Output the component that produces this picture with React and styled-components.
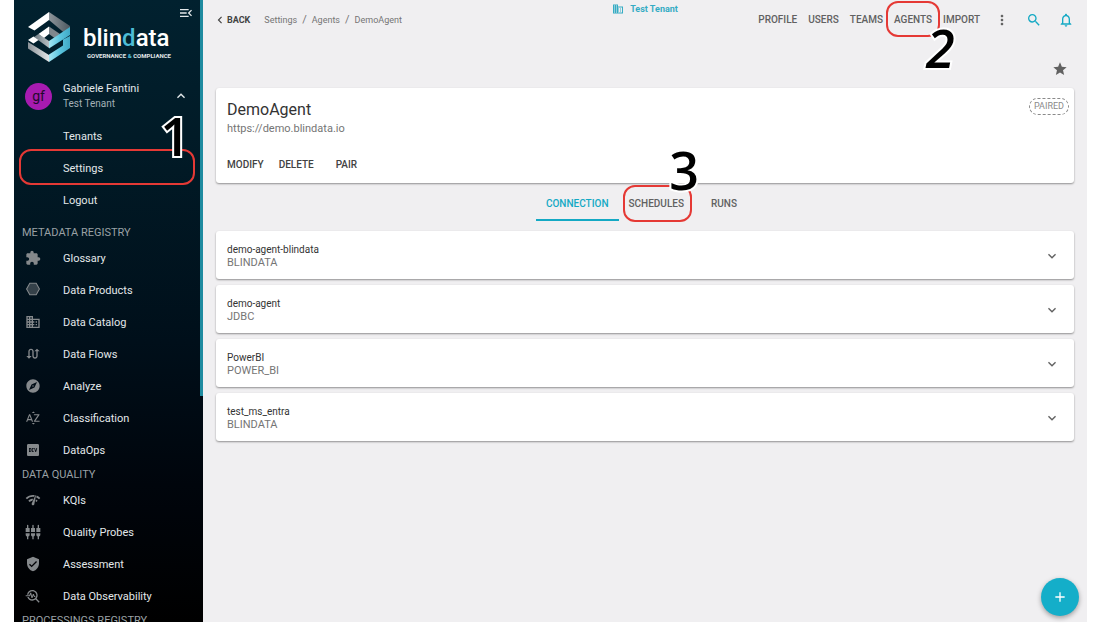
import React, { useState } from "react";
import styled, { createGlobalStyle, css } from "styled-components";
import {
  MdAdd,
  MdChevronLeft,
  MdDomain,
  MdExpandLess,
  MdExpandMore,
  MdExplore,
  MdExtension,
  MdLogoDev,
  MdMenuOpen,
  MdMoreVert,
  MdNetworkCheck,
  MdNotificationsNone,
  MdSearch,
  MdSettingsInputComponent,
  MdSortByAlpha,
  MdStar,
  MdSwapCalls,
  MdTroubleshoot,
  MdVerifiedUser,
} from "react-icons/md";

const HexagonIcon = () => (
  <svg viewBox="0 0 24 24" width="1em" height="1em">
    <path
      d="M7.200 2h9.600L21.600 10.500l-4.800 8.500H7.200L2.400 10.500z"
      fill="currentColor"
      fillOpacity="0.4"
      stroke="currentColor"
      strokeWidth="1.6"
    />
  </svg>
);

const sections = [
  {
    title: "METADATA REGISTRY",
    items: [
      { label: "Glossary", icon: MdExtension },
      { label: "Data Products", icon: HexagonIcon },
      { label: "Data Catalog", icon: MdDomain },
      { label: "Data Flows", icon: MdSwapCalls },
      { label: "Analyze", icon: MdExplore },
      { label: "Classification", icon: MdSortByAlpha },
      { label: "DataOps", icon: MdLogoDev },
    ],
  },
  {
    title: "DATA QUALITY",
    items: [
      { label: "KQIs", icon: MdNetworkCheck },
      { label: "Quality Probes", icon: MdSettingsInputComponent },
      { label: "Assessment", icon: MdVerifiedUser },
      { label: "Data Observability", icon: MdTroubleshoot },
    ],
  },
  { title: "PROCESSINGS REGISTRY", items: [] },
];

const connections = [
  { name: "demo-agent-blindata", type: "BLINDATA" },
  { name: "demo-agent", type: "JDBC" },
  { name: "PowerBI", type: "POWER_BI" },
  { name: "test_ms_entra", type: "BLINDATA" },
];

const Logo = () => (
  <LogoBox>
    <svg viewBox="0 0 43 50" width="43" height="50">
      <defs>
        <linearGradient id="band" x1="0" x2="1" y1="0" y2="0">
          <stop offset="0" stopColor="#a5e6f3" />
          <stop offset="0.5" stopColor="#5cc6e0" />
          <stop offset="1" stopColor="#3fa9c6" />
        </linearGradient>
        <linearGradient id="gray" x1="0" x2="1" y1="0" y2="0">
          <stop offset="0" stopColor="#8b9298" />
          <stop offset="1" stopColor="#e3e6e8" />
        </linearGradient>
        <linearGradient id="roof" x1="0" x2="1" y1="0" y2="0">
          <stop offset="0" stopColor="#8e959b" />
          <stop offset="1" stopColor="#4c5860" />
        </linearGradient>
      </defs>
      <path d="M0 15L21 0v8L6.500 18.500z" fill="#fff" />
      <path d="M21 0l21 14v4l-5 3.500L21 8z" fill="url(#roof)" />
      <path d="M10.500 22L21 14.500V22l-5 4z" fill="#fff" />
      <path d="M21 14.500L32 22l-5.500 4L21 22z" fill="#7f878d" />
      <path d="M10.500 22L21 29v7L6 25z" fill="url(#gray)" opacity="0.8" />
      <path d="M42 15v8L21 36.500V29z" fill="url(#band)" />
      <path d="M0 28l5.500-3.500L10.500 28 5.500 31.500z" fill="#fff" />
      <path d="M0 30l21 13v7L0 36.500z" fill="url(#gray)" />
      <path d="M35 27.500l7-3.500v12L21 50v-7.500l14-9z" fill="url(#band)" />
    </svg>
    <div>
      <LogoName>
        blin<b>d</b>ata
      </LogoName>
      <LogoTag>
        GOVERNANCE <b>&amp;</b> COMPLIANCE
      </LogoTag>
    </div>
  </LogoBox>
);

const Connection = ({ name, type }) => {
  const [open, setOpen] = useState(false);
  return (
    <ConnectionCard>
      <ConnectionButton aria-expanded={open} onClick={() => setOpen((prev) => !prev)}>
        <span>
          <ConnectionName>{name}</ConnectionName>
          <ConnectionType>{type}</ConnectionType>
        </span>
        {open ? <MdExpandLess /> : <MdExpandMore />}
      </ConnectionButton>
    </ConnectionCard>
  );
};

const App = () => {
  const [tab, setTab] = useState("CONNECTION");
  return (
    <Page>
      <GlobalStyle />
      <Sidebar>
        <CollapseButton aria-label="Collapse menu">
          <MdMenuOpen />
        </CollapseButton>
        <Logo />
        <User aria-label="Account menu">
          <Avatar>gf</Avatar>
          <UserText>
            <UserName>Gabriele Fantini</UserName>
            <UserTenant>Test Tenant</UserTenant>
          </UserText>
          <MdExpandLess />
        </User>
        <UserMenu>
          <MenuItem href="#tenants">Tenants</MenuItem>
          <MenuItem href="#settings">
            Settings
            <Ring $inset="-3px 5px -1px 5px" />
            <Step $inset="-36px 10px auto auto">1</Step>
          </MenuItem>
          <MenuItem href="#logout">Logout</MenuItem>
        </UserMenu>
        {sections.map((section) => (
          <React.Fragment key={section.title}>
            <SectionTitle>{section.title}</SectionTitle>
            <SectionList>
              {section.items.map(({ label, icon: Icon }) => (
                <MenuItem key={label} href="#">
                  <MenuIcon>
                    <Icon />
                  </MenuIcon>
                  {label}
                </MenuItem>
              ))}
            </SectionList>
          </React.Fragment>
        ))}
        <ScrollThumb />
      </Sidebar>

      <Main>
        <Header>
          <HeaderLeft>
            <BackButton>
              <MdChevronLeft />
              BACK
            </BackButton>
            <Breadcrumb>
              <a href="#settings">Settings</a>
              <i>/</i>
              <a href="#agents">Agents</a>
              <i>/</i>
              <a href="#demo">DemoAgent</a>
            </Breadcrumb>
          </HeaderLeft>
          <Tenant>
            <MdDomain />
            Test Tenant
          </Tenant>
          <HeaderRight>
            <Nav>
              <NavLink href="#profile">PROFILE</NavLink>
              <NavLink href="#users">USERS</NavLink>
              <NavLink href="#teams">TEAMS</NavLink>
              <NavLink href="#agents">
                AGENTS
                <Ring $inset="-13px -8px -11px -8px" />
                <Step $inset="14px auto auto 32px" $slanted>
                  2
                </Step>
              </NavLink>
              <NavLink href="#import">IMPORT</NavLink>
            </Nav>
            <HeaderIcons>
              <IconButton aria-label="More" $dark>
                <MdMoreVert />
              </IconButton>
              <IconButton aria-label="Search">
                <MdSearch />
              </IconButton>
              <IconButton aria-label="Notifications">
                <MdNotificationsNone />
              </IconButton>
            </HeaderIcons>
          </HeaderRight>
        </Header>

        <StarRow>
          <IconButton aria-label="Favourite" $dark>
            <MdStar />
          </IconButton>
        </StarRow>

        <AgentCard>
          <AgentTop>
            <div>
              <AgentName>DemoAgent</AgentName>
              <AgentUrl>https://demo.blindata.io</AgentUrl>
            </div>
            <Paired>PAIRED</Paired>
          </AgentTop>
          <Actions>
            <Action>MODIFY</Action>
            <Action>DELETE</Action>
            <Action $spaced>PAIR</Action>
          </Actions>
        </AgentCard>

        <Tabs role="tablist">
          {["CONNECTION", "SCHEDULES", "RUNS"].map((name) => (
            <Tab
              key={name}
              role="tab"
              aria-selected={tab === name}
              $active={tab === name}
              onClick={() => setTab(name)}
            >
              {name}
              {name === "SCHEDULES" && (
                <>
                  <Ring $inset="-1px 2px -3px 4px" />
                  <Step $inset="-36px -5px auto auto">3</Step>
                </>
              )}
            </Tab>
          ))}
        </Tabs>

        <Connections>
          {connections.map((item) => (
            <Connection key={item.name} {...item} />
          ))}
        </Connections>

        <AddButton aria-label="Add">
          <MdAdd />
        </AddButton>
      </Main>
    </Page>
  );
};
export default App;

const GlobalStyle = createGlobalStyle`
  * {
    box-sizing: border-box;
  }
  body {
    margin: 0;
    background: #fff;
    font-family: Roboto, "Liberation Sans", sans-serif;
    color: #333;
  }
  button {
    padding: 0;
    border: 0;
    background: none;
    font: inherit;
    color: inherit;
    cursor: pointer;
  }
  a {
    color: inherit;
    text-decoration: none;
  }
  svg {
    display: block;
    flex-shrink: 0;
  }
`;

const Page = styled.div`
  display: flex;
  height: 100vh;
  padding: 0 11px 2px 14px;
`;

/* sidebar */
const Sidebar = styled.aside`
  position: relative;
  flex: 0 0 189px;
  padding-right: 3px;
  overflow: hidden;
  color: #e3e8ea;
  background: linear-gradient(#01212f 0, #011a26 25%, #000f1a 55%, #00050c 78%, #000 100%);
`;
const ScrollThumb = styled.div`
  position: absolute;
  top: 0;
  right: 0;
  width: 3px;
  height: 396px;
  background: #1f8ba0;
`;
const CollapseButton = styled.button`
  position: absolute;
  top: 5px;
  right: 9px;
  font-size: 16px;
`;
const LogoBox = styled.div`
  display: flex;
  gap: 12px;
  padding: 12px 0 0 14px;
`;
const LogoName = styled.div`
  margin-top: 12px;
  font-size: 24px;
  line-height: 28px;
  font-weight: 500;
  color: #fff;
  b {
    font-weight: inherit;
    color: #4dbcd6;
  }
`;
const LogoTag = styled.div`
  margin-left: 4px;
  font-size: 6px;
  line-height: 8px;
  font-weight: 700;
  white-space: nowrap;
  color: #e3e8ea;
  b {
    color: #4dbcd6;
  }
`;
const User = styled.button`
  display: flex;
  align-items: center;
  width: 100%;
  height: 42px;
  margin-top: 13px;
  padding: 0 11px;
  text-align: left;
  svg {
    font-size: 16px;
  }
`;
const Avatar = styled.span`
  width: 27px;
  height: 27px;
  border-radius: 50%;
  background: #a71bb0;
  color: #1f0a2c;
  font-size: 14px;
  line-height: 27px;
  text-align: center;
`;
const UserText = styled.span`
  flex: 1;
  margin-left: 11px;
`;
const UserName = styled.span`
  display: block;
  font-size: 11px;
  line-height: 16px;
`;
const UserTenant = styled.span`
  display: block;
  font-size: 10px;
  line-height: 14px;
  color: #a3b0b6;
`;
const UserMenu = styled.nav`
  padding: 3px 0 9px;
`;
const MenuItem = styled.a`
  position: relative;
  display: flex;
  align-items: center;
  height: 32px;
  padding-left: 49px;
  font-size: 11px;
`;
const MenuIcon = styled.span`
  width: 38px;
  margin-left: -38px;
  font-size: 16px;
  color: #85898c;
`;
const SectionTitle = styled.h2`
  margin: 0;
  padding-left: 8px;
  font-size: 11px;
  line-height: 16px;
  font-weight: 400;
  white-space: nowrap;
  color: #9aa1a5;
`;
const SectionList = styled.nav`
  padding: 1px 0;
`;

/* numbered callouts */
const Ring = styled.span`
  position: absolute;
  inset: ${({ $inset }) => $inset};
  border: 2px solid #e53935;
  border-radius: 12px;
  pointer-events: none;
`;
const Step = styled.span`
  position: absolute;
  inset: ${({ $inset }) => $inset};
  z-index: 1;
  font-family: "Open Sans", sans-serif;
  font-size: 52px;
  line-height: 40px;
  font-weight: 600;
  font-style: ${({ $slanted }) => ($slanted ? "italic" : "normal")};
  color: #000;
  -webkit-text-stroke: 4px #fff;
  paint-order: stroke fill;
  pointer-events: none;
`;

/* content */
const Main = styled.main`
  position: relative;
  flex: 1;
  min-width: 0;
  padding: 0 13px;
  background: #f0eff1;
`;
const Header = styled.header`
  display: grid;
  grid-template-columns: 1fr auto 1fr;
  height: 40px;
`;
const HeaderLeft = styled.div`
  display: flex;
  align-items: center;
  gap: 14px;
`;
const BackButton = styled.button`
  display: flex;
  align-items: center;
  margin-left: -3px;
  font-size: 9px;
  line-height: 14px;
  font-weight: 700;
  color: #424242;
  svg {
    font-size: 14px;
  }
`;
const Breadcrumb = styled.nav`
  display: flex;
  gap: 5px;
  font-size: 9px;
  line-height: 12px;
  color: #757575;
  i {
    font-size: 11px;
    font-style: normal;
  }
`;
const Tenant = styled.div`
  display: flex;
  align-items: center;
  gap: 6px;
  height: 17px;
  font-size: 9px;
  font-weight: 700;
  color: #35acc4;
  svg {
    font-size: 12px;
  }
`;
const HeaderRight = styled.div`
  display: flex;
  align-items: center;
  justify-content: flex-end;
  gap: 14px;
`;
const HeaderIcons = styled.div`
  display: flex;
  gap: 16px;
`;
const Nav = styled.nav`
  display: flex;
  gap: 11px;
`;
const NavLink = styled.a`
  position: relative;
  font-size: 10px;
  line-height: 12px;
  font-weight: 500;
  color: #616161;
`;
const IconButton = styled.button`
  font-size: 16px;
  color: ${({ $dark }) => ($dark ? "#616161" : "#14a9c4")};
`;
const StarRow = styled.div`
  display: flex;
  justify-content: flex-end;
  align-items: center;
  height: 48px;
  padding: 10px 6px 0 0;
`;
const paper = css`
  border-radius: 3px;
  background: #fff;
  box-shadow: 0 1px 2px rgba(0, 0, 0, 0.4);
`;
const AgentCard = styled.section`
  ${paper}
  padding: 10px 5px 10px 11px;
`;
const AgentTop = styled.div`
  display: flex;
  justify-content: space-between;
  align-items: flex-start;
`;
const AgentName = styled.h1`
  margin: 0;
  font-size: 16px;
  line-height: 24px;
  font-weight: 400;
`;
const AgentUrl = styled.div`
  font-size: 11px;
  line-height: 14px;
  color: #757575;
`;
const Paired = styled.span`
  padding: 0 4px;
  border: 1px dashed #8a8a8a;
  border-radius: 9px;
  font-size: 9px;
  line-height: 15px;
  color: #8a8a8a;
`;
const Actions = styled.div`
  display: flex;
  gap: 15px;
  margin-top: 21px;
`;
const Action = styled.button`
  margin-left: ${({ $spaced }) => ($spaced ? "7px" : "0")};
  font-size: 10px;
  line-height: 16px;
  font-weight: 500;
  color: #424242;
`;
const Tabs = styled.div`
  display: flex;
  justify-content: center;
  margin-top: 3px;
`;
const Tab = styled.button`
  position: relative;
  min-width: 60px;
  height: 35px;
  padding: 2px 10px 0;
  border-bottom: 2px solid ${({ $active }) => ($active ? "#14a9c4" : "transparent")};
  font-size: 10px;
  font-weight: 500;
  color: ${({ $active }) => ($active ? "#14a9c4" : "#616161")};
`;
const Connections = styled.div`
  display: grid;
  gap: 6px;
  margin-top: 10px;
`;
const ConnectionCard = styled.section`
  ${paper}
`;
const ConnectionButton = styled.button`
  display: flex;
  align-items: center;
  justify-content: space-between;
  width: 100%;
  height: 48px;
  padding: 2px 14px 0 11px;
  text-align: left;
  svg {
    font-size: 16px;
    color: #616161;
  }
`;
const ConnectionName = styled.span`
  display: block;
  font-size: 10px;
  line-height: 13px;
`;
const ConnectionType = styled.span`
  display: block;
  font-size: 11px;
  line-height: 13px;
  color: #757575;
`;
const AddButton = styled.button`
  position: absolute;
  right: 8px;
  bottom: 6px;
  display: grid;
  place-items: center;
  width: 38px;
  height: 38px;
  border-radius: 50%;
  background: #14aec9;
  color: #fff;
  font-size: 16px;
  box-shadow: 0 2px 5px rgba(0, 0, 0, 0.35);
`;
